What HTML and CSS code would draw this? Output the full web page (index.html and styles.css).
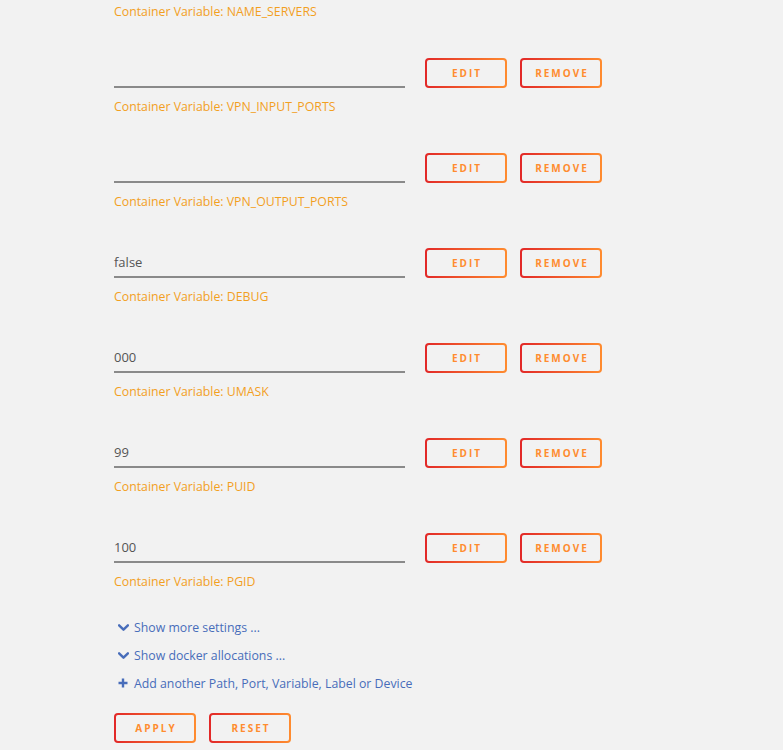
FILE: index.html
```html
<!DOCTYPE html>
<html>
<head>
<meta charset="utf-8">
<link rel="stylesheet" href="styles.css">
</head>
<body>
<div class="page">
  <div class="label first">Container Variable: NAME_SERVERS</div>

  <div class="entry">
    <div class="field"><div class="input"></div><button class="btn">EDIT</button><button class="btn">REMOVE</button></div>
    <div class="label">Container Variable: VPN_INPUT_PORTS</div>
  </div>
  <div class="entry">
    <div class="field"><div class="input"></div><button class="btn">EDIT</button><button class="btn">REMOVE</button></div>
    <div class="label">Container Variable: VPN_OUTPUT_PORTS</div>
  </div>
  <div class="entry">
    <div class="field"><div class="input">false</div><button class="btn">EDIT</button><button class="btn">REMOVE</button></div>
    <div class="label">Container Variable: DEBUG</div>
  </div>
  <div class="entry">
    <div class="field"><div class="input">000</div><button class="btn">EDIT</button><button class="btn">REMOVE</button></div>
    <div class="label">Container Variable: UMASK</div>
  </div>
  <div class="entry">
    <div class="field"><div class="input">99</div><button class="btn">EDIT</button><button class="btn">REMOVE</button></div>
    <div class="label">Container Variable: PUID</div>
  </div>
  <div class="entry">
    <div class="field"><div class="input">100</div><button class="btn">EDIT</button><button class="btn">REMOVE</button></div>
    <div class="label">Container Variable: PGID</div>
  </div>

  <div class="links">
    <div class="link"><svg class="ico" viewBox="0 0 10 8"><path d="M1 2 L5 6 L9 2" fill="none" stroke="currentColor" stroke-width="2.2" stroke-linecap="round" stroke-linejoin="round"/></svg>Show more settings ...</div>
    <div class="link"><svg class="ico" viewBox="0 0 10 8"><path d="M1 2 L5 6 L9 2" fill="none" stroke="currentColor" stroke-width="2.2" stroke-linecap="round" stroke-linejoin="round"/></svg>Show docker allocations ...</div>
    <div class="link"><svg class="ico plus" viewBox="0 0 10 10"><path d="M5 0.5 V9.5 M0.5 5 H9.5" fill="none" stroke="currentColor" stroke-width="2.4"/></svg>Add another Path, Port, Variable, Label or Device</div>
  </div>

  <div class="actions">
    <button class="btn">APPLY</button><button class="btn">RESET</button>
  </div>
</div>
</body>
</html>
```

FILE: styles.css
```css
html, body {
  margin: 0;
  padding: 0;
  background: #f2f2f2;
}
body {
  font-family: "Open Sans", "Liberation Sans", sans-serif;
  font-size: 12.3px;
}
.page {
  padding: 4px 0 0 114px;
}
.label {
  color: #f2a01f;
  font-size: 12.3px;
  line-height: 16px;
  height: 16px;
}
.entry {
  margin-top: 38px;
}
.entry + .entry {
  margin-top: 38px;
}
.field {
  display: flex;
  align-items: flex-start;
  height: 30px;
}
.input {
  width: 291px;
  height: 28px;
  box-sizing: content-box;
  border-bottom: 2px solid #8a8a8a;
  color: #555;
  font-size: 13px;
  line-height: 28px;
}
.entry .label {
  margin-top: 11px;
}
.btn {
  box-sizing: border-box;
  width: 82px;
  height: 30px;
  margin: 0 0 0 13px;
  padding: 0;
  border: 2px solid transparent;
  border-radius: 4px;
  background:
    linear-gradient(#f2f2f2, #f2f2f2) padding-box,
    linear-gradient(90deg, #e22828, #ff8c2f) border-box;
  color: #ff8c2f;
  font-family: "Open Sans", "Liberation Sans", sans-serif;
  font-weight: 700;
  font-size: 10px;
  letter-spacing: 2px;
  text-indent: 2px;
}
.field .input + .btn {
  margin-left: 20px;
}
.links {
  margin-top: 23px;
}
.link {
  display: flex;
  align-items: center;
  height: 28px;
  color: #486dba;
  font-size: 12.3px;
}
.ico {
  width: 11px;
  height: 9px;
  margin: 0 5px 0 4px;
  color: #486dba;
}
.ico.plus {
  width: 10px;
  height: 10px;
  margin: 0 6px 0 4px;
}
.actions {
  display: flex;
  margin-top: 16px;
}
.actions .btn:first-child {
  margin-left: 0;
}
```
